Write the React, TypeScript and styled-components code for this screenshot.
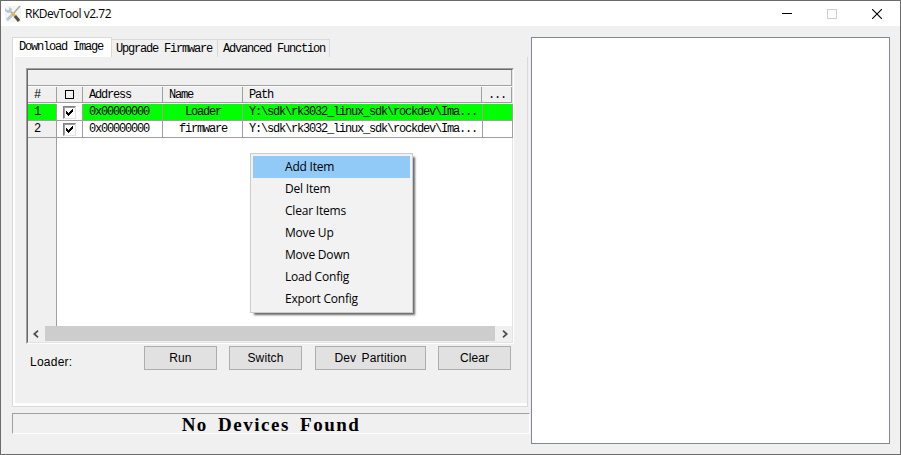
import React from "react";
import styled, { createGlobalStyle } from "styled-components";

const Global = createGlobalStyle`
  * { box-sizing: border-box; }
  body { margin: 0; }
`;

const Window = styled.main`
  width: 901px;
  height: 455px;
  display: flex;
  flex-direction: column;
  border: 1px solid #6b6b6b;
  background: #f0f0f0;
  color: #000;
  overflow: hidden;
`;

const TitleBar = styled.header`
  height: 25px;
  flex: none;
  display: flex;
  align-items: center;
  background: #fff;
  padding: 0 1px 0 3px;
`;

const Title = styled.h1`
  margin: 0 auto 0 3px;
  font: 400 12px/24px "Open Sans", "Noto Sans", sans-serif;
  letter-spacing: -0.47px;
`;

const Caption = styled.button`
  width: 45px;
  height: 25px;
  padding: 0;
  border: 0;
  background: none;
  display: grid;
  place-items: center;
`;

const Body = styled.div`
  flex: 1;
  display: flex;
  padding: 11px 0 0 11px;
`;

const Left = styled.section`
  width: 519px;
  display: flex;
  flex-direction: column;
`;

const FixedText = styled.span`
  font: 400 12px/14px "Liberation Mono", monospace;
  letter-spacing: -1.2px;
  white-space: pre;
`;

const Tabs = styled.nav`
  display: flex;
  align-items: flex-end;
  height: 20px;
`;

const Tab = styled.div<{ $active?: boolean; $width: number; $pad: number }>`
  width: ${(p) => p.$width}px;
  height: ${(p) => (p.$active ? 20 : 18)}px;
  padding: 2px 0 0 ${(p) => p.$pad}px;
  border: 1px solid #d9d9d9;
  border-bottom: 0;
  border-left-width: ${(p) => (p.$active ? 1 : 0)}px;
  background: ${(p) => (p.$active ? "#fff" : "#f0f0f0")};
  display: flex;
`;

const Panel = styled.div`
  width: 516px;
  height: 350px;
  border: 1px solid #d9d9d9;
  border-top: 0;
  box-shadow: inset 2px -3px 0 #fff;
  padding: 11px 0 0 13px;
`;

const Grid = styled.div`
  width: 488px;
  height: 276px;
  border: 1px solid #a0a0a0;
  border-right-color: #fff;
  border-bottom-color: #fff;
`;

const GridInner = styled.div`
  position: relative;
  width: 486px;
  height: 274px;
  border: 1px solid #696969;
  border-right-color: #e3e3e3;
  border-bottom-color: #e3e3e3;
  background: #fff;
  display: flex;
  flex-direction: column;
`;

const GroupBar = styled.div`
  height: 16px;
  width: 484px;
  background: #f0f0f0;
  border-right: 1px solid #a0a0a0;
  border-bottom: 1px solid #a0a0a0;
  margin-bottom: 1px;
`;

const Row = styled.div<{ $kind: "head" | "on" | "off" }>`
  display: grid;
  grid-template-columns: 29px 26px 80px 80px ${(p) => (p.$kind === "head" ? "239px 30px" : "240px 30px")};
  height: ${(p) => (p.$kind === "head" ? 16 : 17)}px;
  background: ${(p) => ({ head: "#f0f0f0", on: "#00ff00", off: "#fff" })[p.$kind]};
  margin-bottom: ${(p) => (p.$kind === "head" ? 1 : 0)}px;
`;

const Cell = styled.div<{ $fill?: string; $center?: boolean; $pad?: number }>`
  display: flex;
  align-items: center;
  justify-content: ${(p) => (p.$center ? "center" : "flex-start")};
  padding-left: ${(p) => p.$pad ?? 6}px;
  background: ${(p) => p.$fill ?? "transparent"};
  border-right: 1px solid #a0a0a0;
  border-bottom: 1px solid #a0a0a0;
  overflow: hidden;
`;

const HeaderBox = styled.span`
  width: 9px;
  height: 9px;
  border: 1px solid #000;
`;

const Check = styled.span`
  width: 13px;
  height: 13px;
  display: grid;
  place-items: center;
  background: #fff;
  border: 1px solid;
  border-color: #808080 #e3e3e3 #e3e3e3 #808080;
  box-shadow: inset 1px 1px #a0a0a0;
`;

const Blank = styled.div`
  flex: 1;
  display: flex;
`;

const RowHeaderFill = styled.div`
  width: 29px;
  background: #f0f0f0;
  border-right: 1px solid #a0a0a0;
`;

const ScrollBar = styled.div`
  height: 16px;
  display: flex;
  background: #f0f0f0;
`;

const ScrollArrow = styled.div<{ $right?: boolean }>`
  width: 17px;
  display: flex;
  align-items: center;
  padding-left: ${(p) => (p.$right ? 7 : 4)}px;
`;

const Thumb = styled.div`
  width: 450px;
  height: 15px;
  background: #cdcdcd;
`;

const Menu = styled.ul`
  position: absolute;
  left: 222px;
  top: 83px;
  width: 163px;
  height: 160px;
  margin: 0;
  padding: 2px;
  list-style: none;
  background: #f2f2f2;
  border: 1px solid #ccc;
  box-shadow: 3px 3px 2px -1px rgba(0, 0, 0, 0.6);
`;

const MenuItem = styled.li<{ $hot?: boolean }>`
  height: 22px;
  padding-left: 32px;
  font: 400 12px/22px "Open Sans", "Noto Sans", sans-serif;
  letter-spacing: -0.2px;
  background: ${(p) => (p.$hot ? "#91c9f7" : "transparent")};
`;

const Actions = styled.div`
  display: flex;
  align-items: flex-start;
  margin: 2px 0 0 4px;
  font: 400 12px/14px "Liberation Sans", Arial, sans-serif;
`;

const LoaderLabel = styled.span`
  width: 114px;
  padding-top: 9px;
  letter-spacing: 0.25px;
`;

const Push = styled.button<{ $width: number; $after?: number }>`
  width: ${(p) => p.$width}px;
  height: 24px;
  margin-right: ${(p) => p.$after ?? 12}px;
  padding: 0;
  background: #e1e1e1;
  border: 1px solid #adadad;
  color: #000;
  font: inherit;
  letter-spacing: 0.1px;
  word-spacing: 2px;
`;

const Status = styled.div`
  width: 518px;
  height: 21px;
  margin-top: 6px;
  border: 1px solid #a0a0a0;
  border-right-color: #fff;
  border-bottom-color: #fff;
  text-align: center;
  font: 700 19px/21px "Liberation Serif", serif;
  letter-spacing: 1.5px;
  word-spacing: 4px;
  white-space: nowrap;
`;

const Log = styled.section`
  width: 359px;
  height: 407px;
  background: #fff;
  border: 1px solid #828790;
`;

const tabs = [
  { label: "Download Image", width: 100, pad: 6 },
  { label: "Upgrade Firmware", width: 106, pad: 4 },
  { label: "Advanced Function", width: 112, pad: 5 },
];

const rows = [
  { id: "1", address: "0x00000000", name: "Loader", path: "Y:\\sdk\\rk3032_linux_sdk\\rockdev\\Ima..." },
  { id: "2", address: "0x00000000", name: "firmware", path: "Y:\\sdk\\rk3032_linux_sdk\\rockdev\\Ima..." },
];

const menuItems = ["Add Item", "Del Item", "Clear Items", "Move Up", "Move Down", "Load Config", "Export Config"];

const ToolsIcon = () => (
  <svg width="18" height="18" viewBox="0 0 18 18">
    <path d="M1 1h16v16H1z" fill="#f3f5f6" />
    <path d="M5 5 15 15" stroke="#a9bac8" strokeWidth="2" />
    <path d="M1 3v3l3 2 3-1 1-3-3-2 0 3H3z" fill="#b7c6d3" />
    <path d="M16 1 9 9" stroke="#a9a9a2" strokeWidth="1.4" />
    <path d="M10 8 3 15" stroke="#b7c6d3" strokeWidth="2.6" />
    <path d="m8 8 3 3" stroke="#e8b53c" strokeWidth="2.5" />
    <path d="m11 11 4 5" stroke="#5a4d38" strokeWidth="3" />
  </svg>
);

const Arrow = ({ right = false }: { right?: boolean }) => (
  <svg width="7" height="8" viewBox="0 0 7 8">
    <path d={right ? "M1 .7 4.7 4 1 7.3" : "M6 .7 2.3 4 6 7.3"} fill="none" stroke="#505050" strokeWidth="1.8" />
  </svg>
);

const CheckMark = () => (
  <svg width="9" height="9" viewBox="0 0 9 9">
    <path d="M1 3v3l2 2 5-5V0L3 5z" fill="#000" shapeRendering="crispEdges" />
  </svg>
);

export default function App() {
  return (
    <>
      <Global />
      <Window>
        <TitleBar>
          <ToolsIcon />
          <Title>RKDevTool v2.72</Title>
          <Caption aria-label="Minimize">
            <svg width="10" height="10"><path d="M0 4.5h10" stroke="#000" /></svg>
          </Caption>
          <Caption aria-label="Maximize">
            <svg width="10" height="10"><path d="M.5 .5h9v9h-9z" fill="none" stroke="#ccc" /></svg>
          </Caption>
          <Caption aria-label="Close">
            <svg width="10" height="10"><path d="m0 0 10 10M10 0 0 10" stroke="#000" strokeWidth="1.1" /></svg>
          </Caption>
        </TitleBar>
        <Body>
          <Left>
            <Tabs>
              {tabs.map((t, i) => (
                <Tab key={t.label} $active={i === 0} $width={t.width} $pad={t.pad}>
                  <FixedText>{t.label}</FixedText>
                </Tab>
              ))}
            </Tabs>
            <Panel>
              <Grid>
                <GridInner>
                  <GroupBar />
                  <Row $kind="head">
                    <Cell><FixedText>#</FixedText></Cell>
                    <Cell $center $pad={0}><HeaderBox /></Cell>
                    <Cell><FixedText>Address</FixedText></Cell>
                    <Cell><FixedText>Name</FixedText></Cell>
                    <Cell><FixedText>Path</FixedText></Cell>
                    <Cell><FixedText>...</FixedText></Cell>
                  </Row>
                  {rows.map((r, i) => (
                    <Row key={r.id} $kind={i === 0 ? "on" : "off"}>
                      <Cell $fill={i === 0 ? "#00ff00" : "#f0f0f0"}><FixedText>{r.id}</FixedText></Cell>
                      <Cell $fill="#fff" $center $pad={0}><Check><CheckMark /></Check></Cell>
                      <Cell><FixedText>{r.address}</FixedText></Cell>
                      <Cell $center $pad={1}><FixedText>{r.name}</FixedText></Cell>
                      <Cell><FixedText>{r.path}</FixedText></Cell>
                      <Cell />
                    </Row>
                  ))}
                  <Blank><RowHeaderFill /></Blank>
                  <ScrollBar>
                    <ScrollArrow><Arrow /></ScrollArrow>
                    <Thumb />
                    <ScrollArrow $right><Arrow right /></ScrollArrow>
                  </ScrollBar>
                  <Menu>
                    {menuItems.map((m, i) => <MenuItem key={m} $hot={i === 0}>{m}</MenuItem>)}
                  </Menu>
                </GridInner>
              </Grid>
              <Actions>
                <LoaderLabel>Loader:</LoaderLabel>
                <Push $width={73}>Run</Push>
                <Push $width={73} $after={13}>Switch</Push>
                <Push $width={111}>Dev Partition</Push>
                <Push $width={73}>Clear</Push>
              </Actions>
            </Panel>
            <Status>No Devices Found</Status>
          </Left>
          <Log />
        </Body>
      </Window>
    </>
  );
}
